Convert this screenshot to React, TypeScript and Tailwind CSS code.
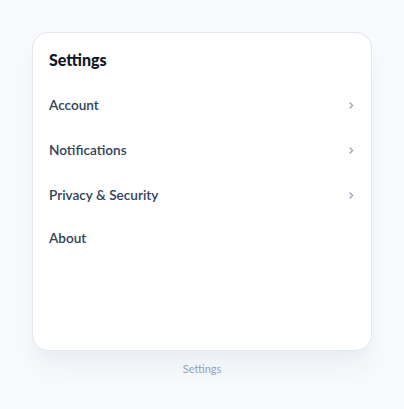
import React from 'react';

const items = [
  { label: 'Account', chevron: true },
  { label: 'Notifications', chevron: true },
  { label: 'Privacy & Security', chevron: true },
  { label: 'About', chevron: false },
];

const App: React.FC = () => {
  return (
    <div className="min-h-screen bg-slate-50 px-8 pt-8 font-['Lato',sans-serif]">
      <div className="h-[319px] rounded-2xl border border-slate-200 bg-white px-4 pt-[15px] shadow-xl shadow-slate-200/50">
        <h2 className="text-[16px] font-black leading-6 text-slate-900">Settings</h2>
        <ul className="mt-[11px]">
          {items.map((item) => (
            <li
              key={item.label}
              className={`flex items-center justify-between text-[13.6px] font-semibold text-slate-700 ${
                item.chevron ? 'h-[45px]' : 'h-[41px]'
              }`}
            >
              <span>{item.label}</span>
              {item.chevron && (
                <svg width="5" height="7" viewBox="0 0 5 7" className="mr-[1px] text-slate-400">
                  <path d="M1 1 L3.6 3.5 L1 6" fill="none" stroke="currentColor" strokeWidth="1.3" strokeLinecap="round" strokeLinejoin="round" />
                </svg>
              )}
            </li>
          ))}
        </ul>
      </div>
      <p className="mt-2.5 text-center text-[11px] leading-4 text-slate-400">Settings</p>
    </div>
  );
};

export default App;
